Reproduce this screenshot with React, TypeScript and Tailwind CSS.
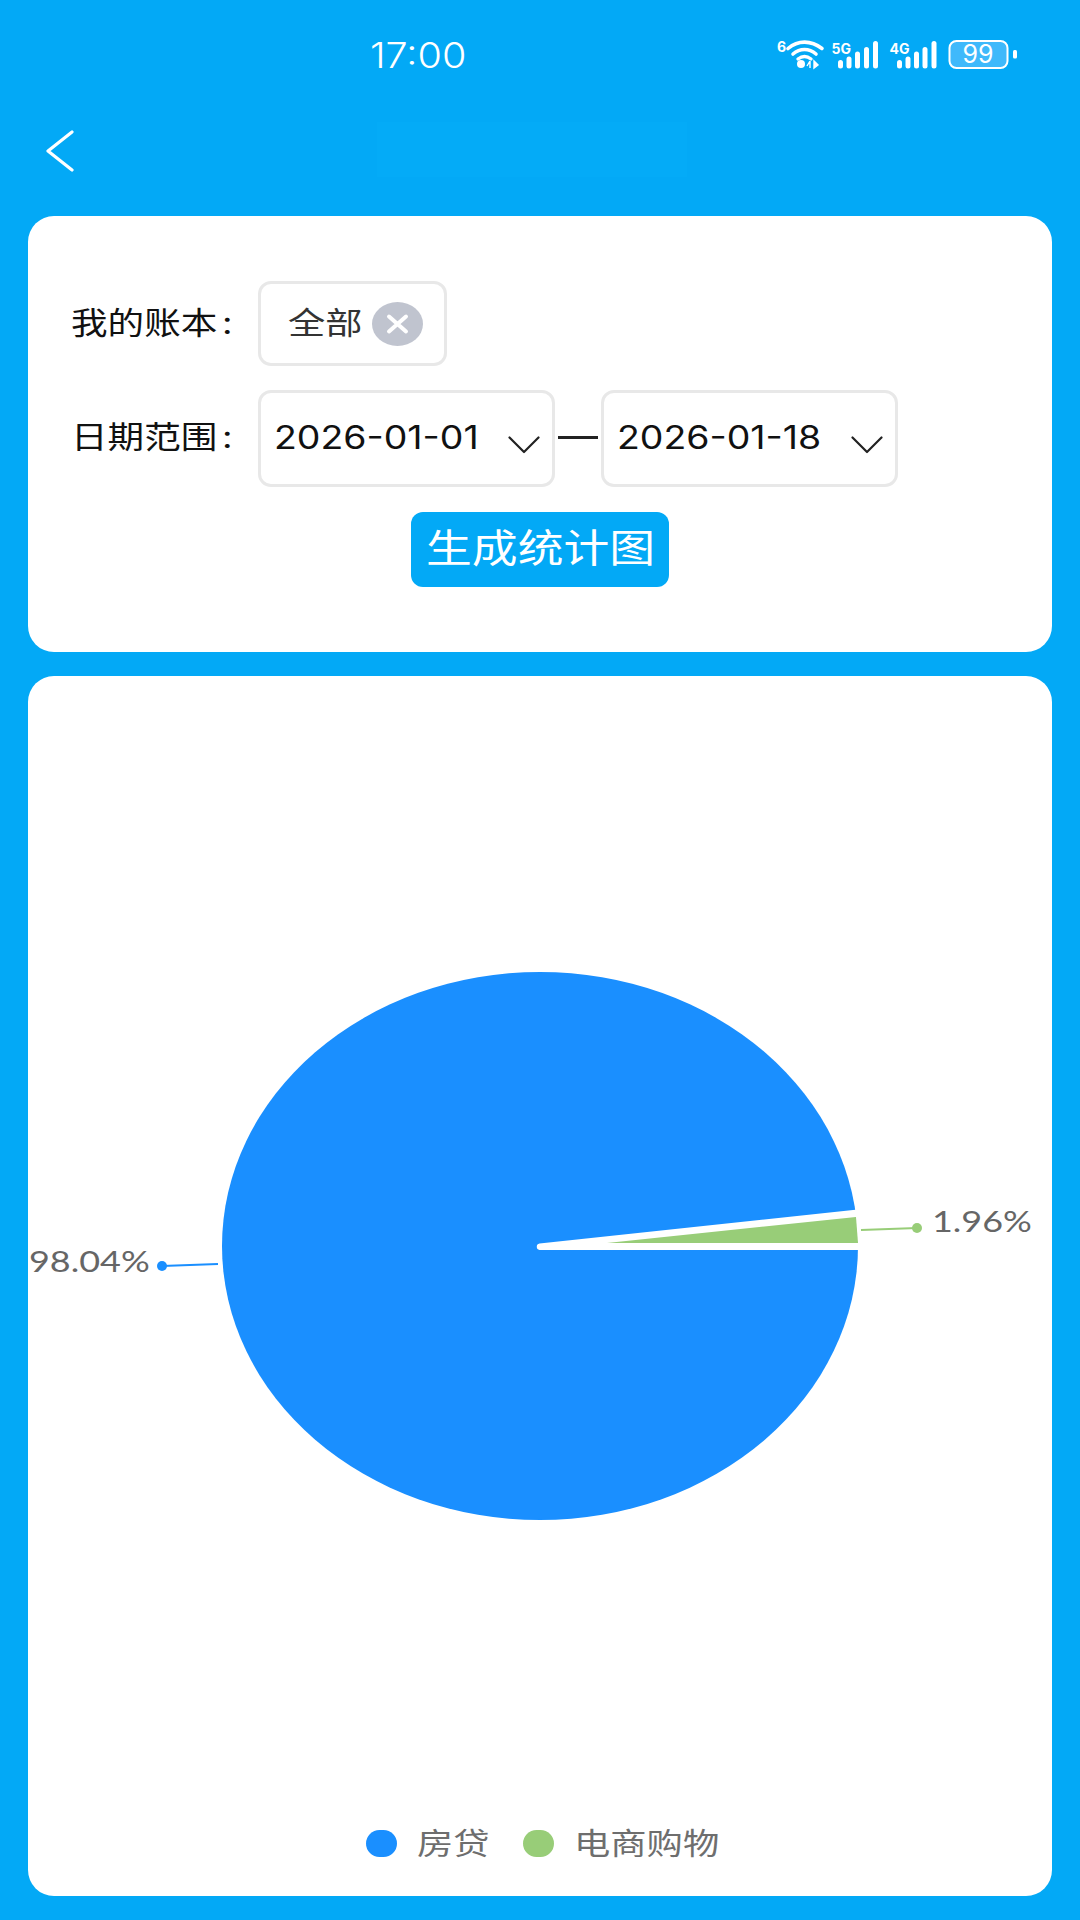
const font = '[font-family:"Inter","Noto_Sans_CJK_SC",sans-serif]';

function Chevron() {
  return (
    <svg viewBox="0 0 32 18" className="w-[32px] h-[18px] shrink-0" fill="none">
      <path d="M1.5 1.5L16 16L30.5 1.5" stroke="#222" strokeWidth="2.2" strokeLinecap="round" strokeLinejoin="round" />
    </svg>
  );
}

function DateBox({ value }: { value: string }) {
  return (
    <div className="w-[297px] h-[97px] rounded-[13px] border-[3px] border-[#e8e8e8] pl-[13px] pr-[12px] flex items-center justify-between bg-white">
      <span className="origin-left scale-x-[1.17] text-[32px] leading-[36px] text-[#111] -mt-[1px] whitespace-nowrap">{value}</span>
      <div className="mt-[12px]"><Chevron /></div>
    </div>
  );
}

function StatusIcons() {
  const bars = (xs: number[]) =>
    xs.map((x, i) => {
      const tops = [60, 56.5, 51.5, 47, 41];
      return <rect key={x} x={x} y={tops[i]} width="5" height={68.5 - tops[i]} rx="2.5" fill="#fff" />;
    });
  return (
    <svg viewBox="770 30 270 50" className="w-[270px] h-[50px]" fill="none">
      <text x="777" y="52" fontSize="14" fontWeight="700" fill="#fff" fontFamily="Inter">6</text>
      <path d="M788 48.5C798 40 811 40 822 48.5" stroke="#fff" strokeWidth="3.6" strokeLinecap="round" />
      <path d="M793 54C800 48 809 48 816 54" stroke="#fff" strokeWidth="3.6" strokeLinecap="round" />
      <path d="M798 59C802 56 807 56 811 59" stroke="#fff" strokeWidth="3.4" strokeLinecap="round" />
      <circle cx="801" cy="64" r="4" fill="#fff" />
      <path d="M810 61V68M807 66L810 61M814 61V68L818 65Z" stroke="#fff" strokeWidth="1.4" fill="#fff" />
      <text x="831.5" y="53.5" fontSize="14" fontWeight="700" fill="#fff" fontFamily="Inter">5G</text>
      {bars([838, 846.5, 855, 864, 873])}
      <text x="889.5" y="53.5" fontSize="14" fontWeight="700" fill="#fff" fontFamily="Inter">4G</text>
      {bars([897, 905.5, 914, 922.5, 931.5])}
      <rect x="949.5" y="41" width="58" height="27" rx="7" fill="#3fb9fb" stroke="#fff" strokeWidth="2" />
      <text x="978" y="63" fontSize="25" fontWeight="400" fill="#fff" textAnchor="middle" fontFamily="Inter">99</text>
      <rect x="1013" y="50" width="4" height="8.5" rx="1.5" fill="#fff" />
    </svg>
  );
}

function Legend({ color, label, width }: { color: string; label: string; width: string }) {
  return (
    <div className="flex items-center">
      <div className="w-[31px] h-[27px] rounded-full" style={{ backgroundColor: color }} />
      <span className={`origin-left scale-x-[1.21] text-[30px] leading-[36px] text-[#6e6e6e] ml-[20px] whitespace-nowrap ${width}`}>{label}</span>
    </div>
  );
}

export default function App() {
  return (
    <div className={`w-[1080px] h-[1920px] bg-[#03a9f6] overflow-hidden flex flex-col ${font}`}>
      <div className="h-[96px] flex items-start pl-[370px] pr-[23px] pt-[30px]">
        <span className="origin-left scale-x-[1.13] text-[35px] leading-[50px] font-light text-white w-[400px]">17:00</span>
        <StatusIcons />
      </div>
      <div className="h-[120px] flex items-start pl-[46px] pt-[26px]">
        <svg viewBox="0 0 28 42" className="w-[28px] h-[42px] mt-[8px] shrink-0" fill="none">
          <path d="M26 2L2 21L26 40" stroke="#fff" strokeWidth="3.2" strokeLinecap="round" strokeLinejoin="round" />
        </svg>
        <div className="ml-[303px] w-[310px] h-[55px] bg-[#04abf7]" />
      </div>

      <div className="mx-[28px] h-[436px] bg-white rounded-[26px] pt-[65px] flex flex-col">
        <div className="flex items-center pl-[43px]">
          <span className="origin-left scale-x-[1.18] text-[31px] leading-[40px] w-[187px] text-[#111] whitespace-nowrap -mt-[2px]">我的账本<span className="ml-[4px]">:</span></span>
          <div className="w-[189px] h-[85px] rounded-[13px] border-[3px] border-[#e8e8e8] flex items-center pl-[27px] bg-white">
            <span className="origin-left scale-x-[1.2] text-[31px] leading-[40px] text-[#333] w-[84px] whitespace-nowrap -mt-[1px]">全部</span>
            <svg viewBox="0 0 51 44" className="w-[51px] h-[44px]">
              <ellipse cx="25.5" cy="22" rx="25.5" ry="22" fill="#c0c4cf" />
              <path d="M17 14.5L34 29.5M34 14.5L17 29.5" stroke="#fff" strokeWidth="4" strokeLinecap="round" />
            </svg>
          </div>
        </div>
        <div className="flex items-center pl-[43px] mt-[24px]">
          <span className="origin-left scale-x-[1.18] text-[31px] leading-[40px] w-[187px] text-[#111] whitespace-nowrap -mt-[3px]">日期范围<span className="ml-[4px]">:</span></span>
          <DateBox value="2026-01-01" />
          <div className="w-[40px] h-[3px] bg-[#222] mx-[3px] mt-[-2px]" />
          <DateBox value="2026-01-18" />
        </div>
        <div className="flex justify-center mt-[25px]">
          <div className="w-[258px] h-[75px] bg-[#03a9f6] rounded-[12px] flex items-center pl-[15px]">
            <span className="origin-left scale-x-[1.175] text-[39px] leading-[46px] text-white whitespace-nowrap -mt-[3px]">生成统计图</span>
          </div>
        </div>
      </div>

      <div className="mx-[28px] mt-[24px] h-[1220px] bg-white rounded-[26px] flex flex-col">
        <svg viewBox="28 675 1024 1130" className="w-[1024px] h-[1130px] shrink-0" fill="none">
          <ellipse cx="540" cy="1245" rx="318" ry="274" fill="#1a8fff" />
          <path d="M539.5 1242.5L860 1208.3V1249H539.5A3.3 3.3 0 0 1 539.5 1242.5Z" fill="#fff" />
          <path d="M607 1242L856 1216L858 1242Z" fill="#98cd78" />
          <path d="M861 1229L917 1227" stroke="#98cd78" strokeWidth="2" />
          <circle cx="917" cy="1227" r="5" fill="#98cd78" />
          <g transform="translate(932 1231) scale(1.24 1)">
            <text x="0" y="0" fontSize="29" fill="#666" fontFamily="Lato, Inter, sans-serif">1.96%</text>
          </g>
          <path d="M218 1263L162 1265" stroke="#1a8fff" strokeWidth="2" />
          <circle cx="162" cy="1265" r="5" fill="#1a8fff" />
          <g transform="translate(29 1271) scale(1.24 1)">
            <text x="0" y="0" fontSize="29" fill="#666" fontFamily="Lato, Inter, sans-serif">98.04%</text>
          </g>
        </svg>
        <div className="flex items-center pl-[338px] mt-[19px]">
          <Legend color="#1a8fff" label="房贷" width="w-[89px]" />
          <div className="w-[17px]" />
          <Legend color="#98cd78" label="电商购物" width="w-[160px]" />
        </div>
      </div>
    </div>
  );
}
